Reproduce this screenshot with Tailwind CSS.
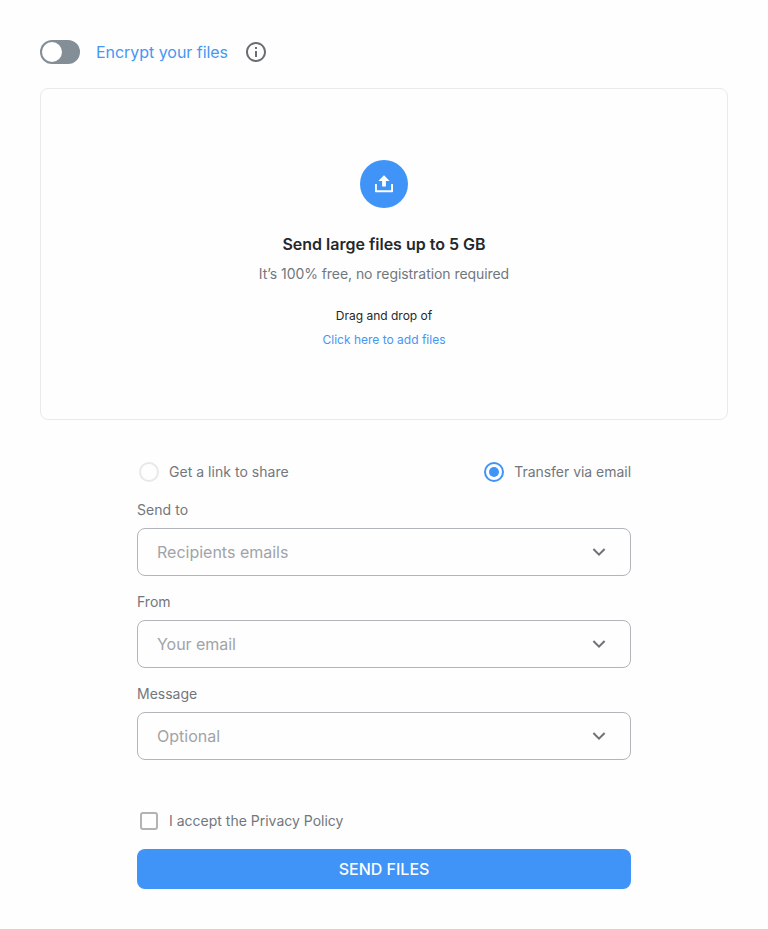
<!DOCTYPE html>
<html lang="en">
<head>
<meta charset="utf-8">
<title>Send files</title>
<script src="https://cdn.jsdelivr.net/npm/@tailwindcss/browser@4"></script>
</head>
<body class="bg-[#fefefe] font-[Inter,sans-serif] text-[#72777d]">
<main class="px-10 pt-10">
  <header class="flex h-6 items-center">
    <button class="flex h-6 w-10 items-center rounded-full bg-[#838e96] pl-[2px]" aria-label="Encrypt"><span class="size-5 rounded-full bg-white"></span></button>
    <span class="ml-4 w-[132px] text-base leading-6 tracking-[-0.04px] whitespace-nowrap text-[#4696f3]">Encrypt your files</span>
    <svg class="ml-4 size-6" viewBox="0 0 24 24" fill="#696d74"><path d="M11 7h2v2h-2zm0 4h2v6h-2zm1-9C6.480 2 2 6.480 2 12s4.480 10 10 10 10-4.480 10-10S17.520 2 12 2zm0 18c-4.410 0-8-3.590-8-8s3.590-8 8-8 8 3.590 8 8-3.590 8-8 8z"/></svg>
  </header>

  <section class="mt-6 flex h-[332px] flex-col items-center rounded-lg border border-[#e9eaeb] pt-[71px]">
    <div class="flex size-12 items-center justify-center rounded-full bg-[#4094f7]">
      <svg class="size-6" viewBox="0 0 24 24" fill="#fff"><path d="M3 12h1.900v6.200h14.200V12H21v7.500q0 .7-.7.7H3.700q-.7 0-.7-.7z"/><path d="M10.100 14.500h3.800V9H17.600L12 3.300 6.400 9h3.700z"/></svg>
    </div>
    <h1 class="mt-6 text-base leading-6 font-semibold text-[#25282b]">Send large files up to 5 GB</h1>
    <p class="mt-2 text-sm leading-5 tracking-[-0.06px]">It’s 100% free, no registration required</p>
    <p class="mt-6 text-xs leading-4 text-[#25282b]">Drag and drop of</p>
    <a class="mt-2 text-xs leading-4 text-[#4696f3]">Click here to add files</a>
  </section>

  <form class="mx-auto mt-10 w-[494px]">
    <div class="flex h-6 items-center justify-between text-sm leading-5">
      <label class="flex items-center pl-[2px] tracking-[0.03px]"><span class="mr-[10px] size-5 rounded-full border-2 border-[#e8e8e9]"></span>Get a link to share</label>
      <label class="flex items-center tracking-[-0.03px]"><span class="mr-[10px] flex size-5 items-center justify-center rounded-full border-2 border-[#4094f7]"><span class="size-[10px] rounded-full bg-[#4094f7]"></span></span>Transfer via email</label>
    </div>

    <label class="mt-4 block text-sm leading-5 tracking-[0.05px]">Send to</label>
    <div class="mt-2 flex h-12 items-center justify-between rounded-lg border border-[#b1b5b9] pr-[19px] pl-[19px]">
      <span class="text-base leading-6 text-[#a0a4a8]">Recipients emails</span>
      <svg class="size-6" viewBox="0 0 24 24" fill="none" stroke="#6e7277" stroke-width="2"><path d="m6.400 9 5.600 5.600L17.600 9"/></svg>
    </div>

    <label class="mt-4 block text-sm leading-5">From</label>
    <div class="mt-2 flex h-12 items-center justify-between rounded-lg border border-[#b1b5b9] pr-[19px] pl-[19px]">
      <span class="text-base leading-6 tracking-[-0.05px] text-[#a0a4a8]">Your email</span>
      <svg class="size-6" viewBox="0 0 24 24" fill="none" stroke="#6e7277" stroke-width="2"><path d="m6.400 9 5.600 5.600L17.600 9"/></svg>
    </div>

    <label class="mt-4 block text-sm leading-5">Message</label>
    <div class="mt-2 flex h-12 items-center justify-between rounded-lg border border-[#b1b5b9] pr-[19px] pl-[19px]">
      <span class="text-base leading-6 text-[#a0a4a8]">Optional</span>
      <svg class="size-6" viewBox="0 0 24 24" fill="none" stroke="#6e7277" stroke-width="2"><path d="m6.400 9 5.600 5.600L17.600 9"/></svg>
    </div>

    <label class="mt-[49px] flex h-6 items-center pl-[3px] text-sm leading-5"><span class="mr-[11px] size-[18px] rounded-[3px] border-2 border-[#b0b4b5]"></span>I accept the Privacy Policy</label>
    <button type="button" class="mt-4 block h-10 w-full rounded-lg bg-[#4094f7] text-base leading-6 font-medium text-white">SEND FILES</button>
  </form>
</main>
</body>
</html>
